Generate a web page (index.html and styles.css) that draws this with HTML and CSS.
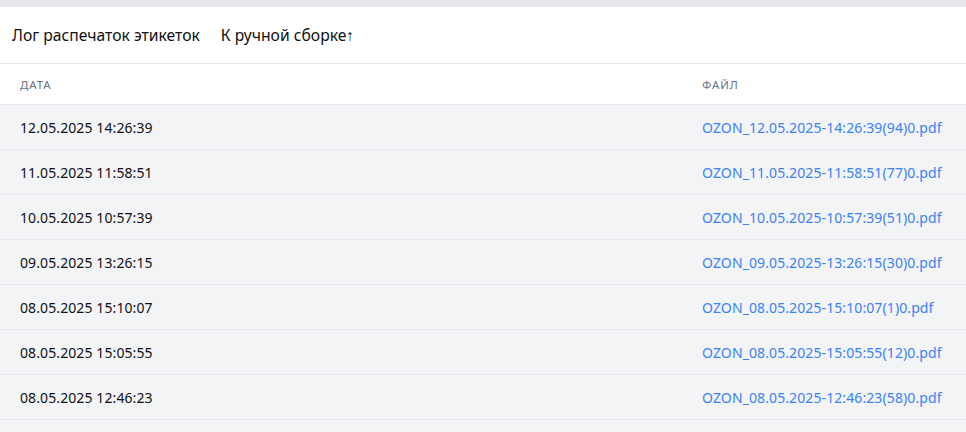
FILE: index.html
```html
<!DOCTYPE html>
<html lang="ru">
<head>
<meta charset="utf-8">
<link rel="stylesheet" href="styles.css">
</head>
<body>
<div class="topbar"></div>
<div class="panel">
  <div class="tabs">
    <span class="tab">Лог распечаток этикеток</span>
    <span class="tab">К ручной сборке↑</span>
  </div>
  <div class="table">
    <div class="row head">
      <div class="cell">Дата</div>
      <div class="cell">Файл</div>
    </div>
    <div class="row">
      <div class="cell">12.05.2025 14:26:39</div>
      <div class="cell"><a class="link">OZON_12.05.2025-14:26:39(94)0.pdf</a></div>
    </div>
    <div class="row">
      <div class="cell">11.05.2025 11:58:51</div>
      <div class="cell"><a class="link">OZON_11.05.2025-11:58:51(77)0.pdf</a></div>
    </div>
    <div class="row">
      <div class="cell">10.05.2025 10:57:39</div>
      <div class="cell"><a class="link">OZON_10.05.2025-10:57:39(51)0.pdf</a></div>
    </div>
    <div class="row">
      <div class="cell">09.05.2025 13:26:15</div>
      <div class="cell"><a class="link">OZON_09.05.2025-13:26:15(30)0.pdf</a></div>
    </div>
    <div class="row">
      <div class="cell">08.05.2025 15:10:07</div>
      <div class="cell"><a class="link">OZON_08.05.2025-15:10:07(1)0.pdf</a></div>
    </div>
    <div class="row">
      <div class="cell">08.05.2025 15:05:55</div>
      <div class="cell"><a class="link">OZON_08.05.2025-15:05:55(12)0.pdf</a></div>
    </div>
    <div class="row">
      <div class="cell">08.05.2025 12:46:23</div>
      <div class="cell"><a class="link">OZON_08.05.2025-12:46:23(58)0.pdf</a></div>
    </div>
  </div>
</div>
</body>
</html>
```
FILE: styles.css
```css
html, body {
  margin: 0;
  padding: 0;
  background: #f3f4f6;
  font-family: "Noto Sans", "Open Sans", sans-serif;
  color: #111111;
  overflow: hidden;
}
.topbar {
  height: 7px;
  background: #e5e7eb;
}
.panel {
  background: #ffffff;
}
.tabs {
  height: 56px;
  display: flex;
  align-items: center;
  gap: 21px;
  padding: 0 12px;
  border-bottom: 1px solid #e5e7eb;
  font-size: 15.7px;
  color: #111111;
}
.table {
  display: flex;
  flex-direction: column;
}
.row {
  display: grid;
  grid-template-columns: 683px 1fr;
  height: 44px;
  align-items: center;
  background: #f3f4f6;
  border-bottom: 1px solid #e5e7eb;
  font-size: 14px;
  letter-spacing: 0.1px;
}
.row.head {
  height: 40px;
  background: #ffffff;
  font-size: 11.5px;
  text-transform: uppercase;
  letter-spacing: 0.9px;
  color: #6b7280;
}
.cell {
  padding-left: 20px;
  white-space: nowrap;
}
.cell + .cell {
  padding-left: 19px;
}
.link {
  color: #3b82f6;
  text-decoration: none;
}
```
